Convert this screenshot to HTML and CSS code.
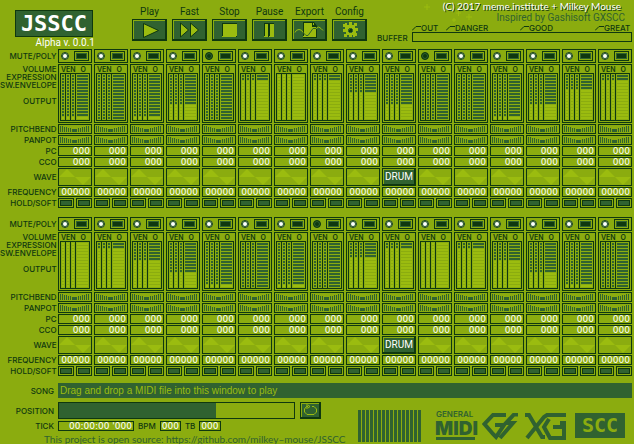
FILE: index.html
```html
<!DOCTYPE html>
<html lang="en">
<head>
<meta charset="utf-8">
<title>JSSCC</title>
<link rel="stylesheet" href="styles.css">
</head>
<body>
<header class="top">
  <div class="brand">
    <h1 class="logo">JSSCC</h1>
    <p class="version">Alpha v. 0.0.1</p>
  </div>
  <div class="toolbar">
    <div class="tool"><label for="play">Play</label>
      <button id="play" class="bevel"><svg viewBox="0 0 35 22"><path class="hi edge" d="M11.5 4.500V18.500L26.500 11.500Z"/></svg></button></div>
    <div class="tool"><label for="fast">Fast</label>
      <button id="fast" class="bevel"><svg viewBox="0 0 35 22"><path class="hi edge" d="M8.500 4V18L16.500 11ZM18.500 4V18L26.500 11Z"/></svg></button></div>
    <div class="tool"><label for="stop">Stop</label>
      <button id="stop" class="bevel"><svg viewBox="0 0 35 22"><path class="dark" d="M10 4H25V18H10Z"/><path class="hi" d="M11 5H25V17H24V18H10V17H11Z"/></svg></button></div>
    <div class="tool"><label for="pause">Pause</label>
      <button id="pause" class="bevel"><svg viewBox="0 0 35 22"><path class="dark" d="M12 4H22V18H12Z"/><path class="hi" d="M13 5H16V18H12V17H13ZM18 5H22V18H17V17H18Z"/></svg></button></div>
    <div class="tool"><label for="export">Export</label>
      <button id="export" class="bevel"><svg viewBox="0 0 35 22"><path class="dark" d="M11 3H22L25 7V19H11Z"/><path class="hi" d="M12 4H20V8H24V18H11V17H12Z"/><path class="hi" d="M21 4H22V6H21Z"/><path class="line" d="M3 13.500Q4 10.500 7 10.500T11 13.500"/><path class="line mid" d="M11 13.500L14 16.500H16L21 9.500H24"/><path class="line" d="M24 9.500Q27 6.500 29 9.500L31 11.500"/></svg></button></div>
    <div class="tool"><label for="config">Config</label>
      <button id="config" class="bevel"><svg viewBox="0 0 35 22"><path class="hi" d="M11 5H13V4H15V6H17V3H20V6H22V4H25V7H23V9H26V12H24V14H25V17H23V18H21V16H20V18H17V16H15V18H12V15H14V13H11V10H13V8H11Z"/><path class="mid-fill" d="M17 9H20V10H21V13H20V14H17V13H16V10H17Z"/><path class="dark" d="M18 10H20V13H17V11H18Z"/></svg></button></div>
  </div>
  <div class="status">
    <svg class="sparkles" viewBox="0 0 70 24"><path d="M10 7h6M13 4v6M42 13h5M44.500 11v5M52 17h6M55 14v6M38 20h4M40 18v4"/></svg>
    <p class="credit">(C) 2017 meme.institute + Milkey Mouse</p>
    <p class="inspired">Inspired by Gashisoft GXSCC</p>
    <div class="legend">
      <span><svg viewBox="0 0 9 6"><path d="M0 5.500L4 1.500H9"/></svg>OUT</span>
      <span><svg viewBox="0 0 9 6"><path d="M0 5.500L4 1.500H9"/></svg>DANGER</span>
      <span><svg viewBox="0 0 9 6"><path d="M0 5.500L4 1.500H9"/></svg>GOOD</span>
      <span><svg viewBox="0 0 9 6"><path d="M0 5.500L4 1.500H9"/></svg>GREAT</span>
    </div>
    <label class="caption" for="buffer">BUFFER</label>
    <progress id="buffer" class="gauge" value="0" max="100"></progress>
  </div>
</header>

<main id="banks"></main>

<footer class="bottom">
  <div class="song-row">
    <span class="caption">SONG</span>
    <p class="song">Drag and drop a MIDI file into this window to play</p>
  </div>
  <div class="deck">
    <div class="transport">
      <label class="caption" for="position">POSITION</label>
      <div class="seek">
        <progress id="position" class="gauge" value="67" max="100"></progress>
        <button class="bevel repeat" aria-label="Repeat"><svg viewBox="0 0 21 17"><path d="M8 4.500H6.500L4.500 7V10L7 12.500H14L16.500 10V7L14 4.500H12M7 2V7M8 3L10 4.500L8 6"/></svg></button>
      </div>
      <span class="caption">TICK</span>
      <div class="counters">
        <span class="digits tick">00:00:00 '000</span>
        <span class="caption">BPM</span><span class="digits">000</span>
        <span class="caption">TB</span><span class="digits">000</span>
      </div>
    </div>
    <div class="logos">
      <div class="grille"></div>
      <svg class="gm" viewBox="0 0 39 28"><text class="gm-top" x="0" y="5">GENERAL</text><text class="gm-main" x="-1" y="23">MIDI</text><path d="M0 25H39V28H0Z"/></svg>
      <svg class="gs" viewBox="0 0 36 27"><path d="M24 2H11L2.500 11L11 21L14 24L22 12H13M36 1.500H32L24 10H31L18 25"/></svg>
      <svg class="xg" viewBox="0 0 41 27"><path d="M0 2H4L17 24H20M2 25L19 4L22 2H41M41 10H35M39 25H25L19 14L24 6M28 14H39V27"/></svg>
      <div class="scc">SCC</div>
    </div>
  </div>
  <p class="source">This project is open source: <a href="https://github.com/milkey-mouse/JSSCC">https://github.com/milkey–mouse/JSSCC</a></p>
</footer>
<script src="app.js"></script>
</body>
</html>
```

FILE: styles.css
```css
:root {
  --bg: #8bac0f;
  --hi: #9bbc0f;
  --mid: #306230;
  --dark: #0f380f;
}
* { box-sizing: border-box; }
body {
  margin: 0;
  padding-right: 2px;
  background: var(--bg);
  color: var(--dark);
  font: 10px/12px Roboto, "Liberation Sans", sans-serif;
}
p, h1 { margin: 0; }
svg { display: block; }
button { padding: 0; border: 0; font: inherit; color: inherit; }
a { color: inherit; text-decoration: none; }

.hi { fill: var(--hi); }
.dark { fill: var(--dark); }
.mid-fill { fill: var(--mid); }
.edge { stroke: var(--dark); stroke-width: 1; }
.line { fill: none; stroke: var(--hi); }
.line.mid { stroke: var(--mid); }

.caption, .legend, .labels {
  font: 500 8px/8px Inter, sans-serif;
}
.bevel {
  display: block;
  background: var(--mid);
  box-shadow: inset -2px -2px var(--dark), inset 1px 1px var(--dark), inset 2px 2px var(--bg);
}

/* header */
.top {
  display: grid;
  grid-template-columns: 132px auto 1fr;
  height: 49px;
}
.brand { padding: 10px 39px 0 15px; }
.logo {
  height: 27px;
  border: 1px solid var(--dark);
  background: var(--mid);
  color: #fff;
  text-align: center;
  font: bold 22px/26px "DejaVu Sans Mono", monospace;
}
.version {
  width: 80px;
  color: #fff;
  text-align: right;
  line-height: 12px;
}
.toolbar { display: flex; gap: 5px; padding-top: 6px; }
.tool { width: 35px; text-align: center; }
.tool label { display: block; height: 13px; white-space: nowrap; font-size: 10px; }
.tool .bevel { width: 35px; height: 22px; }
.status {
  position: relative;
  display: grid;
  grid-template-columns: 35px 1fr;
  grid-template-rows: 12px 12px 8px 10px;
  padding-left: 10px;
}
.sparkles {
  position: absolute;
  left: 47px;
  top: 0;
  width: 70px;
  height: 24px;
  stroke: var(--hi);
}
.credit, .inspired { grid-column: 1 / 3; text-align: right; position: relative; }
.credit { padding-right: 11px; color: #fff; text-shadow: 1px 1px var(--dark); font-family: Lato, sans-serif; }
.inspired { padding-right: 7px; color: var(--mid); }
.legend { grid-column: 2; display: grid; grid-template-columns: 34fr 74fr 75fr 37fr; }
.legend span { display: flex; align-items: center; }
.legend svg { width: 9px; height: 6px; fill: none; stroke: var(--dark); flex: none; }
.status .caption { grid-column: 1; line-height: 12px; }

.gauge {
  appearance: none;
  display: block;
  width: 100%;
  height: 10px;
  border: 1px solid var(--dark);
  background: var(--bg);
}
.gauge::-webkit-progress-bar { background: var(--bg); }
.gauge::-webkit-progress-value { background: var(--mid); }

/* channel banks */
.bank {
  display: grid;
  grid-template-columns: 56px repeat(16, 1fr);
  gap: 2px;
  margin-bottom: 9px;
}
.labels, .channel {
  display: grid;
  grid-template-rows: 14px 59px 10px 10px 10px 10px 18px 10px 10px;
  row-gap: 1px;
  min-width: 0;
}
.labels { padding-right: 2px; text-align: right; align-items: center; }
.labels .levels { align-self: start; padding-top: 1px; }
.labels .levels span { display: block; }
.labels .levels .output { margin-top: 8px; }
.cell { border: 1px solid var(--dark); min-width: 0; }
.switches { display: flex; justify-content: space-between; align-items: center; padding: 0 2px; }
.led {
  appearance: none;
  width: 8px;
  height: 8px;
  margin: 0;
  border: 1px solid var(--dark);
  border-radius: 4px;
  background: var(--dark);
  box-shadow: inset 0 0 0 1px var(--mid);
}
.led:checked { background: #fff; }
.poly {
  width: 15px;
  height: 10px;
  border: 1px solid var(--dark);
  background: var(--dark);
  box-shadow: inset 0 0 0 1px var(--bg), inset 0 0 0 2px var(--mid);
}
.meter { padding: 0 1px 1px; }
.meter-head {
  display: flex;
  justify-content: space-between;
  height: 8px;
  padding: 0 4px 0 1px;
  font: 600 7px/9px Inter, sans-serif;
}
.bars {
  display: grid;
  grid-template-columns: 4px 4px 4px 1fr;
  column-gap: 1px;
  height: 48px;
  border: 1px solid var(--dark);
  background: var(--dark);
}
.bar { padding: 1px 1px 0; background: var(--bg); }
.scale { height: 45px; background: repeating-linear-gradient(var(--hi) 0 2px, var(--bg) 2px 3px); }
.fill { background: repeating-linear-gradient(var(--mid) 0 2px, var(--bg) 2px 3px); }
.bend svg { width: 100%; height: 8px; fill: var(--mid); }
.digits {
  border: 1px solid var(--dark);
  padding: 0 1px;
  color: #fff;
  text-align: right;
  font: 9px/9px "DejaVu Sans", sans-serif;
  white-space: nowrap;
}
.wave svg { width: 100%; height: 16px; fill: var(--hi); }
.drum { width: 100%; color: #fff; font-size: 10px; line-height: 18px; text-align: center; }
.pedals { display: grid; grid-template-columns: 1fr 1fr; column-gap: 2px; }
.pedal {
  border: 1px solid var(--dark);
  background: var(--mid);
  box-shadow: inset 0 0 0 1px var(--bg), inset 0 0 0 2px var(--dark);
}

/* footer */
.bottom { margin-top: -2px; }
.song-row {
  display: grid;
  grid-template-columns: 54px 1fr;
  column-gap: 4px;
  align-items: center;
  margin-bottom: 4px;
}
.song-row .caption, .transport > .caption { text-align: right; }
.song { height: 15px; padding-left: 2px; background: var(--mid); color: var(--hi); font-family: "Liberation Sans", sans-serif; line-height: 15px; }
.deck { display: flex; justify-content: space-between; }
.transport {
  display: grid;
  grid-template-columns: 54px auto;
  grid-template-rows: 17px 10px;
  gap: 2px 4px;
  align-items: center;
}
.seek { display: flex; gap: 5px; }
.seek .gauge { width: 237px; height: 17px; }
.repeat { width: 21px; height: 17px; }
.repeat svg { fill: none; stroke: var(--hi); }
.counters { display: flex; align-items: center; gap: 4px; }
.counters .digits { height: 10px; line-height: 9px; }
.tick { width: 76px; }
.logos { display: flex; align-items: flex-start; padding: 11px 7px 0 0; height: 29px; }
.logos svg { fill: var(--mid); }
.grille {
  width: 63px;
  height: 32px;
  margin: -3px 15px 0 0;
  background:
    linear-gradient(90deg, var(--mid) 2px, transparent 2px) 0 0 / 4px 2px,
    linear-gradient(var(--mid) 1px, transparent 1px) 0 0 / 3px 2px repeat-y,
    linear-gradient(90deg, transparent 2px, var(--mid) 2px 3px, transparent 3px) 0 0 / 4px 2px;
  background-size: 4px 2px, 3px 2px, 4px 2px;
  -webkit-mask: none;
}
.gm { width: 39px; height: 28px; margin: -1px 7px 0 0; overflow: visible; }
.gm-top { font: 600 8px Inter, sans-serif; }
.gm-main { font: 900 19px Inter, sans-serif; }
.gs { width: 36px; height: 27px; margin-right: 7px; }
.xg { width: 41px; height: 27px; margin-right: 9px; }
.logos .gs, .logos .xg { fill: none; stroke: var(--mid); stroke-width: 4; }
.scc {
  width: 50px;
  height: 25px;
  background: var(--mid);
  color: var(--bg);
  text-align: center;
  font: bold 20px/25px "DejaVu Sans Mono", monospace;
}
.source { padding-left: 44px; color: var(--mid); font-family: Lato, sans-serif; line-height: 12px; margin-top: 2px; }
```

FILE: app.js
```js
const banks = [
  { levels: [14, 15, 14, 10, 15, 2, 0, 2, 6, 10, 15, 15, 14, 10, 5, 2], muted: [4, 10] },
  { levels: [0, 2, 6, 10, 14, 15, 14, 15, 5, 2, 0, 2, 6, 10, 14, 15], muted: [7] }
];
const DRUM = 9;

const labels = `<div class="labels">
  <span>MUTE/POLY</span>
  <div class="levels"><span>VOLUME</span><span>EXPRESSION</span><span>SW.ENVELOPE</span><span class="output">OUTPUT</span></div>
  <span>PITCHBEND</span><span>PANPOT</span><span>PC</span><span>CCO</span>
  <span>WAVE</span><span>FREQUENCY</span><span>HOLD/SOFT</span>
</div>`;

const tops = [1, 1, 2, 2, 3, 3, 4, 4, 4, 3, 3, 2, 2, 1, 1];
const bend = '<div class="cell bend"><svg viewBox="0 0 32 8" preserveAspectRatio="none">' +
  tops.map((t, i) => `<rect x="${1 + i * 2}" y="${t}" width="1" height="${7 - t}"/>`).join('') +
  '<rect x="14" y="4" width="3" height="3"/></svg></div>';

const wave = '<div class="cell wave"><svg viewBox="0 0 32 16" preserveAspectRatio="none"><path d="M0 8L8 0L24 16L32 8Z"/></svg></div>';

function channel(level, i, muted) {
  const bar = `<div class="bar"><div class="scale"><div class="fill" style="height:${level * 3}px"></div></div></div>`;
  const n = i + 1;
  return `<div class="channel">
    <div class="cell switches"><input type="checkbox" class="led" aria-label="Channel ${n} on"${muted ? '' : ' checked'}><button class="poly" aria-label="Channel ${n} poly"></button></div>
    <div class="cell meter"><div class="meter-head"><span>VEN</span><span>O</span></div><div class="bars">${bar.repeat(4)}</div></div>
    ${bend}${bend}
    <div class="digits">000</div><div class="digits">000</div>
    ${i === DRUM ? '<button class="bevel drum">DRUM</button>' : wave}
    <div class="digits">00000</div>
    <div class="pedals"><button class="pedal" aria-label="Channel ${n} hold"></button><button class="pedal" aria-label="Channel ${n} soft"></button></div>
  </div>`;
}

document.getElementById('banks').innerHTML = banks.map(b =>
  `<section class="bank">${labels}${b.levels.map((l, i) => channel(l, i, b.muted.includes(i))).join('')}</section>`
).join('');
```
